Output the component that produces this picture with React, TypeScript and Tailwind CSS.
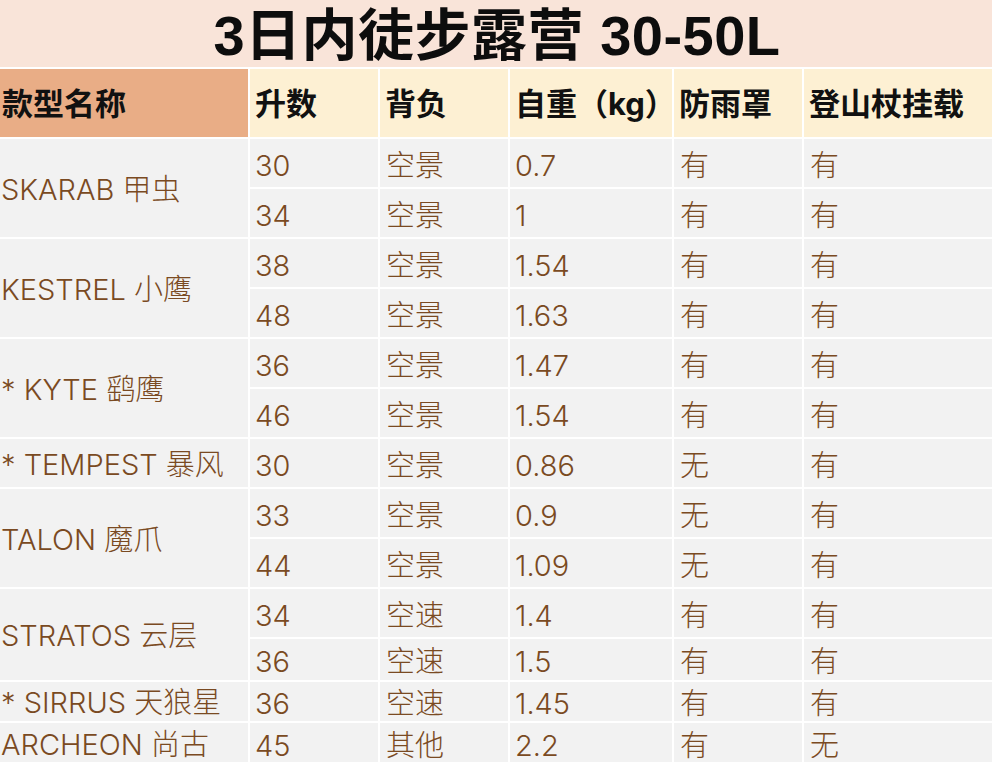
import React from "react";

type Row = { l: string; b: string; w: string; r: string; t: string };
type Group = { name: string; rows: Row[] };

const groups: Group[] = [
  { name: "SKARAB 甲虫", rows: [
    { l: "30", b: "空景", w: "0.7", r: "有", t: "有" },
    { l: "34", b: "空景", w: "1", r: "有", t: "有" },
  ] },
  { name: "KESTREL 小鹰", rows: [
    { l: "38", b: "空景", w: "1.54", r: "有", t: "有" },
    { l: "48", b: "空景", w: "1.63", r: "有", t: "有" },
  ] },
  { name: "* KYTE 鹞鹰", rows: [
    { l: "36", b: "空景", w: "1.47", r: "有", t: "有" },
    { l: "46", b: "空景", w: "1.54", r: "有", t: "有" },
  ] },
  { name: "* TEMPEST 暴风", rows: [
    { l: "30", b: "空景", w: "0.86", r: "无", t: "有" },
  ] },
  { name: "TALON 魔爪", rows: [
    { l: "33", b: "空景", w: "0.9", r: "无", t: "有" },
    { l: "44", b: "空景", w: "1.09", r: "无", t: "有" },
  ] },
  { name: "STRATOS 云层", rows: [
    { l: "34", b: "空速", w: "1.4", r: "有", t: "有" },
    { l: "36", b: "空速", w: "1.5", r: "有", t: "有" },
  ] },
  { name: "* SIRRUS 天狼星", rows: [
    { l: "36", b: "空速", w: "1.45", r: "有", t: "有" },
  ] },
  { name: "ARCHEON 尚古", rows: [
    { l: "45", b: "其他", w: "2.2", r: "有", t: "无" },
  ] },
];

const headers = ["升数", "背负", "自重（kg）", "防雨罩", "登山杖挂载"];

export default function App() {
  return (
    <div className="w-[992px] h-[762px] overflow-hidden bg-white font-[Inter,'Noto_Sans_CJK_SC',sans-serif]">
      <div className="h-[67px] bg-[#f9e4d9] flex items-center justify-center">
        <h1 className="text-[56px] leading-none font-bold tracking-[0.5px] text-[#0d0d0d] font-['Liberation_Sans','Noto_Sans_CJK_SC',sans-serif] pt-[4px] pl-[2px]">
          3日内徒步露营 30-50L
        </h1>
      </div>
      <div className="mt-[2px] grid grid-cols-[248px_128px_128px_162px_128px_188px] grid-rows-[68px_repeat(10,48px)_41px_39px_40px] gap-x-[2px] gap-y-[2px]">
        <div className="bg-[#e9ad86] flex items-center pl-[2px] pt-[3px] text-[31px] font-bold text-[#111]">款型名称</div>
        {headers.map((h) => (
          <div key={h} className="bg-[#fdf0d3] flex items-center pl-[5px] pt-[3px] text-[31px] font-bold text-[#111] whitespace-nowrap">
            {h}
          </div>
        ))}
        {groups.map((g) => (
          <React.Fragment key={g.name}>
            <div
              className={
                "col-start-1 bg-[#f2f2f2] flex items-center pl-[1px] pt-[3px] text-[29px] font-light text-[#7a4a22] whitespace-nowrap " +
                (g.rows.length === 2 ? "row-span-2" : "row-span-1")
              }
            >
              {g.name}
            </div>
            {g.rows.map((r, i) => (
              <React.Fragment key={i}>
                <div className="col-start-2 bg-[#f2f2f2] flex items-center pl-[5px] pt-[5px] text-[29px] font-light text-[#7a4a22]">{r.l}</div>
                <div className="bg-[#f2f2f2] flex items-center pl-[6px] pt-[5px] text-[29px] font-light text-[#7a4a22]">{r.b}</div>
                <div className="bg-[#f2f2f2] flex items-center pl-[5px] pt-[5px] text-[29px] font-light text-[#7a4a22]">{r.w}</div>
                <div className="bg-[#f2f2f2] flex items-center pl-[6px] pt-[5px] text-[29px] font-light text-[#7a4a22]">{r.r}</div>
                <div className="bg-[#f2f2f2] flex items-center pl-[6px] pt-[5px] text-[29px] font-light text-[#7a4a22]">{r.t}</div>
              </React.Fragment>
            ))}
          </React.Fragment>
        ))}
      </div>
    </div>
  );
}
